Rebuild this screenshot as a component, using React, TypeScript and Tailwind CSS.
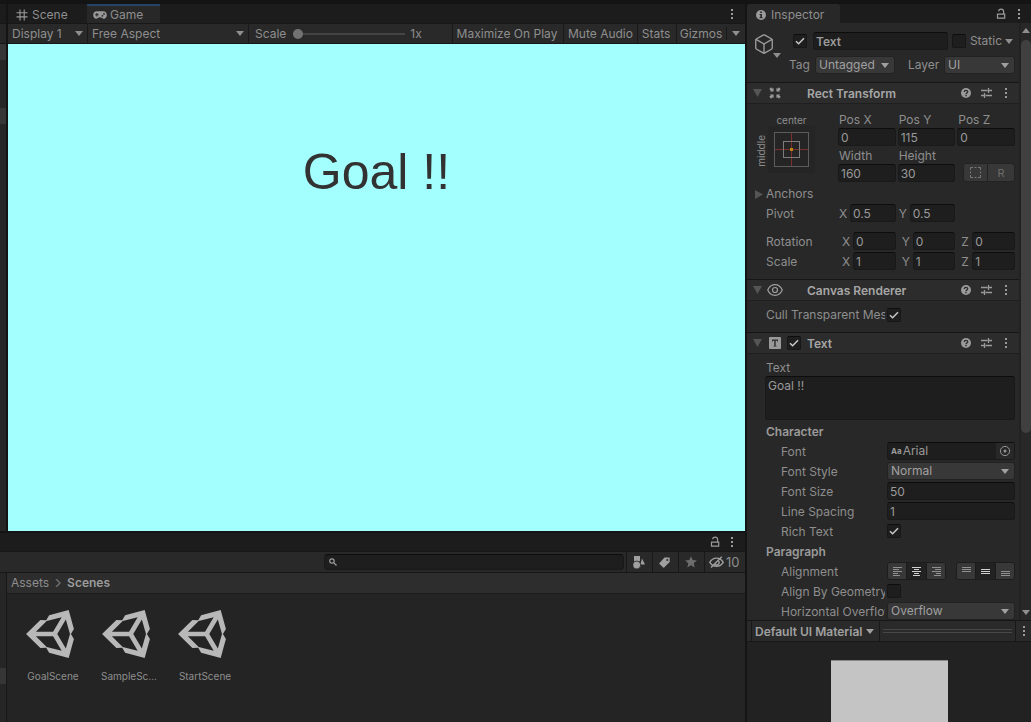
import React from "react";
import { Box } from "lucide-react";

type Kids = { children?: React.ReactNode };

/* ---------- icons ---------- */

const Caret = ({ className = "" }: { className?: string }) => (
  <svg viewBox="0 0 8 5" className={"w-2 h-[5px] shrink-0 fill-current " + className}>
    <path d="M0 0h8L4 5z" />
  </svg>
);

const CaretUp = () => (
  <svg viewBox="0 0 8 5" className="w-2 h-[5px] fill-[#8f8f8f]">
    <path d="M0 5h8L4 0z" />
  </svg>
);

const Kebab = () => (
  <svg viewBox="0 0 4 12" className="w-1 h-3 fill-[#9a9a9a]">
    <path d="M1 1h2v2H1zM1 5h2v2H1zM1 9h2v2H1z" />
  </svg>
);

const Lock = () => (
  <svg viewBox="0 0 10 12" className="w-[10px] h-3 fill-none stroke-[#9a9a9a]" strokeWidth="1.2">
    <path d="M1.5 6.2h7.2v4H1.5zM2.6 3.3C2.8 1.6 3.8 1.2 5 1.2c1.6 0 2.6.9 2.6 2.4v2.6" />
  </svg>
);

const GridIcon = () => (
  <svg viewBox="0 0 12 12" className="w-3 h-3 fill-none stroke-[#9a9a9a]" strokeWidth="1.1">
    <path d="M4 .5v11M8.2 .5v11M.5 3.7h11M.5 7.9h11" />
  </svg>
);

const Gamepad = () => (
  <svg viewBox="0 0 14 8" className="w-[14px] h-2">
    <path d="M3.8.3C1.6.3.2 2 .2 4s1.2 3.7 3 3.7c1.3 0 1.9-1.5 3.8-1.5s2.5 1.5 3.8 1.5c1.8 0 3-1.7 3-3.7S12.4.3 10.2.3z" fill="#9a9a9a" />
    <path d="M3.9 2v3.6M2.1 3.8h3.6" stroke="#282828" strokeWidth="1.1" />
    <circle cx="9.4" cy="4.8" r=".9" fill="#282828" />
    <circle cx="11" cy="2.9" r=".9" fill="#282828" />
  </svg>
);

const Info = () => (
  <svg viewBox="0 0 10 10" className="w-[10px] h-[10px]">
    <circle cx="5" cy="5" r="5" fill="#9a9a9a" />
    <path d="M4.2 1.6h1.7v1.5H4.2zM3.6 4h2.3v3.2h.7v1H3.5v-1h.8V5h-.7z" fill="#282828" />
  </svg>
);

const Help = () => (
  <svg viewBox="0 0 10 10" className="w-[10px] h-[10px]">
    <circle cx="5" cy="5" r="5" fill="#9a9a9a" />
    <path d="M3.3 3.9c0-1 .7-1.6 1.7-1.6s1.7.6 1.7 1.5C6.7 4.9 5 5 5 6.2" fill="none" stroke="#2c2c2c" strokeWidth="1.3" />
    <path d="M4.3 6.9h1.4v1.3H4.3z" fill="#2c2c2c" />
  </svg>
);

const Preset = () => (
  <svg viewBox="0 0 11 10" className="w-[11px] h-[10px] fill-none stroke-[#9a9a9a]" strokeWidth="1.3">
    <path d="M0 2.5h6.5M8 2.5h3M7.5 0v5M0 7.5h3M4.5 7.5H11M3.500 5v5" />
  </svg>
);

const RectIcon = () => (
  <svg viewBox="0 0 14 14" className="w-[14px] h-[14px] fill-[#9a9a9a]">
    <path d="M1.200 3.200L3.200 1.200 4.300 2.800 5.600 1.900V5.600H1.900L2.800 4.300zM12.800 3.200L10.800 1.200 9.700 2.800 8.400 1.900V5.600H12.100L11.200 4.300zM1.200 10.800L3.200 12.800 4.300 11.200 5.600 12.100V8.400H1.900L2.800 9.700zM12.800 10.800L10.800 12.800 9.700 11.200 8.400 12.100V8.400H12.100L11.200 9.700z" />
  </svg>
);

const Eye = () => (
  <svg viewBox="0 0 16 12" className="w-4 h-3 fill-none stroke-[#a0a0a0]" strokeWidth="1.2">
    <path d="M.7 6C2.4 2.300 5 .7 8 .7S13.600 2.300 15.300 6C13.600 9.700 11 11.300 8 11.300S2.400 9.700.7 6z" />
    <circle cx="8" cy="6" r="2.5" />
  </svg>
);

const TextIcon = () => (
  <svg viewBox="0 0 12 12" className="w-3 h-3">
    <rect width="12" height="12" rx="1" fill="#9a9a9a" />
    <path d="M3 2.500h6v2H8.200v-.8H6.700v5h.8v.9h-3v-.9h.8v-5H3.800v.8H3z" fill="#2c2c2c" />
  </svg>
);

const Unity = () => (
  <svg viewBox="15 14 484 484" className="w-12 h-12 mr-[6px] fill-[#b8b8b8]">
    <path d="M498.110,206.400,445.310,14.720,248.200,66.080,219,116.140l-59.200-.43L15.540,256,159.820,396.320l59.170-.43,29.240,50,197.080,51.360,52.800-191.620-30-49.630ZM223.770,124.200,374.550,86.510,288,232.330H114.870Zm0,263.630L114.870,279.710H288l86.550,145.810Zm193,14L330.170,256l86.580-145.840L458.560,256Z" />
  </svg>
);

const Shapes = () => (
  <svg viewBox="0 0 12 13" className="w-3 h-[13px] fill-[#a0a0a0]">
    <path d="M1 0h6v5H1zM9 2.500l3 6H7.500z" />
    <circle cx="3.700" cy="9" r="4" stroke="#2a2a2a" strokeWidth=".8" />
  </svg>
);

const TagIcon = () => (
  <svg viewBox="0 0 11 11" className="w-[11px] h-[11px]">
    <path d="M5.500.5h4.600q.6 0 .6.600v4L5.200 10.600Q4.700 11 4.200 10.600L.5 6.900q-.4-.5 0-1z" fill="#a0a0a0" />
    <circle cx="8.300" cy="2.900" r="1" fill="#2a2a2a" />
  </svg>
);

const Star = () => (
  <svg viewBox="0 0 12 12" className="w-3 h-3 fill-[#6c6c6c]">
    <path d="M6 .2l1.700 3.900 4.200.4-3.200 2.800 1 4.200L6 9.300l-3.700 2.200 1-4.200L.1 4.500l4.200-.4z" />
  </svg>
);

const EyeOff = () => (
  <svg viewBox="0 0 15 12" className="w-[15px] h-3 fill-none stroke-[#a0a0a0]" strokeWidth="1.4">
    <path d="M.8 6.300C2.400 3.400 4.700 2.100 7.500 2.100s5.100 1.300 6.700 4.200c-1.600 2.700-3.900 3.900-6.700 3.900S2.400 9 .8 6.300z" />
    <path d="M9.300 4.700a2.400 2.400 0 1 1-3.500 3.200" />
    <path d="M2 11.500L12.800.7" />
  </svg>
);

const SearchIcon = () => (
  <svg viewBox="0 0 8 8" className="w-2 h-2 shrink-0 fill-none stroke-[#a0a0a0]" strokeWidth="1.2">
    <circle cx="3" cy="3" r="2.2" />
    <path d="M4.700 4.700l2.800 2.800" />
  </svg>
);

const TargetIcon = () => (
  <svg viewBox="0 0 12 12" className="w-3 h-3">
    <circle cx="6" cy="6" r="4.600" fill="none" stroke="#949494" />
    <circle cx="6" cy="6" r="1.500" fill="#949494" />
  </svg>
);

const AnchorIcon = () => (
  <svg viewBox="0 0 35 35" className="w-[35px] h-[35px] fill-none" shapeRendering="crispEdges">
    <rect x=".5" y=".5" width="34" height="34" stroke="#5c5c5c" />
    <path d="M1 17.500h33M17.500 1v33" stroke="#7c2f2f" />
    <rect x="9.500" y="9.500" width="16" height="16" stroke="#7c7c7c" />
    <rect x="16" y="16" width="3" height="3" fill="#b8860b" />
  </svg>
);

const LINES: Record<string, string> = {
  left: "M0 .5h9M0 2.500h6M0 4.500h9M0 6.500h5M0 8.500h7",
  center: "M0 .5h9M2 2.500h5M0 4.500h9M2 6.500h5M1 8.500h7",
  right: "M0 .5h9M3 2.500h6M0 4.500h9M4 6.500h5M2 8.500h7",
  top: "M0 .5h9M0 2.500h9M0 4.500h9",
  middle: "M0 2.500h9M0 4.500h9M0 6.500h9",
  bottom: "M0 4.500h9M0 6.500h9M0 8.500h9",
};

/* ---------- controls ---------- */

const Check = ({ label, id, on = false }: { label: string; id?: string; on?: boolean }) => (
  <span className="relative block w-[14px] h-[14px] shrink-0">
    <input
      id={id}
      type="checkbox"
      defaultChecked={on}
      aria-label={label}
      className="peer block appearance-none w-[14px] h-[14px] rounded-[2px] bg-[#1e1e1e] border border-[#171717] border-t-[#0d0d0d]"
    />
    <svg viewBox="0 0 14 14" className="absolute inset-0 hidden peer-checked:block pointer-events-none fill-none stroke-[#c8c8c8]" strokeWidth="1.5">
      <path d="M3 7.300l2.600 2.500L11 4.300" />
    </svg>
  </span>
);

const Field = ({ label, id, value, className = "" }: { label: string; id?: string; value: string; className?: string }) => (
  <input
    id={id}
    aria-label={label}
    defaultValue={value}
    className={"block h-[18px] w-full min-w-0 rounded-[3px] bg-[#1e1e1e] border border-[#191919] border-t-[#0d0d0d] px-[2px] text-[#9a9a9a] outline-none " + className}
  />
);

const Select = ({ label, id, value, className = "" }: { label: string; id?: string; value: string; className?: string }) => (
  <span className={"relative flex items-center h-[18px] rounded-[3px] border border-[#222] bg-[#383838] text-[#a0a0a0] " + className}>
    <select id={id} aria-label={label} defaultValue={value} className="appearance-none w-full h-4 bg-transparent pl-[3px] pr-4 leading-4 outline-none">
      <option>{value}</option>
    </select>
    <Caret className="absolute right-[5px] pointer-events-none" />
  </span>
);

const IconButton = ({ label, children, className = "" }: Kids & { label: string; className?: string }) => (
  <button aria-label={label} className={"flex items-center justify-center " + className}>
    {children}
  </button>
);

const ToolSelect = ({ label, value, className }: { label: string; value: string; className: string }) => (
  <span className={"relative flex items-center border-r border-[#191919] " + className}>
    <select aria-label={label} defaultValue={value} className="appearance-none w-full h-[18px] bg-transparent pl-1 outline-none">
      <option>{value}</option>
    </select>
    <Caret className="absolute right-1 pointer-events-none" />
  </span>
);

const ToolButton = ({ children, className = "" }: Kids & { className?: string }) => (
  <button className={"border-r border-[#191919] whitespace-nowrap " + className}>{children}</button>
);

/* ---------- inspector pieces ---------- */

const ComponentHeader = ({ title, icon, toggle = false }: { title: string; icon: React.ReactNode; toggle?: boolean }) => (
  <header className="flex items-center h-[22px] border-y border-t-[#161616] border-b-[#1f1f1f] bg-[#2c2c2c] pl-[6px]">
    <svg viewBox="0 0 10 8" className="w-[10px] h-2 fill-[#555]">
      <path d="M0 0h9L4.500 8z" />
    </svg>
    <span className="flex w-6 justify-center">{icon}</span>
    <span className="w-5">{toggle && <Check label={"Enable " + title} on />}</span>
    <h2 className="flex-1 pt-[2px] font-semibold text-[#a6a6a6]">{title}</h2>
    <IconButton label="Help" className="w-5"><Help /></IconButton>
    <IconButton label="Presets" className="w-5"><Preset /></IconButton>
    <IconButton label="More" className="w-5 mr-[3px]"><Kebab /></IconButton>
  </header>
);

const Row = ({ label, id, children }: Kids & { label: string; id?: string }) => (
  <div className="flex h-5 pl-[34px] pr-1">
    <label htmlFor={id} className="w-[104px] mr-[2px] shrink-0 overflow-hidden whitespace-nowrap leading-5">{label}</label>
    <div className="flex-1 min-w-0">{children}</div>
  </div>
);

const Axis = ({ name, group, value, inset = false }: { name: string; group: string; value: string; inset?: boolean }) => (
  <label className={inset ? "flex pl-[3px]" : "flex"}>
    <span className="w-3 pl-[1px] shrink-0 leading-5">{name}</span>
    <Field label={group + " " + name} value={value} />
  </label>
);

const AxisRow = ({ label, values, inset }: { label: string; values: [string, string][]; inset?: boolean }) => (
  <div className="flex h-5 pl-[19px] pr-1">
    <span className="w-[72px] shrink-0 leading-5">{label}</span>
    <div className="grid grid-cols-3 gap-[2px] flex-1">
      {values.map(([n, v]) => (
        <Axis key={n} name={n} group={label} value={v} inset={inset} />
      ))}
    </div>
  </div>
);

const Stacked = ({ label, value }: { label: string; value: string }) => (
  <label className="block">
    <span className="block h-[18px] leading-5 pl-[1px]">{label}</span>
    <Field label={label} value={value} />
  </label>
);

const AlignGroup = ({ names, active }: { names: string[]; active: string }) => (
  <div className="flex h-[18px] w-[59px] rounded-[3px] overflow-hidden border border-[#1d1d1d]">
    {names.map((n) => (
      <IconButton
        key={n}
        label={"Align " + n}
        className={n === active ? "w-[21px] border-x border-[#1b1b1b] bg-[#222] text-[#d0d0d0]" : "flex-1 bg-[#383838] text-[#909090]"}
      >
        <svg viewBox="0 0 9 9" className="w-[9px] h-[9px] shrink-0 stroke-current" shapeRendering="crispEdges">
          <path d={LINES[n]} />
        </svg>
      </IconButton>
    ))}
  </div>
);

const Inspector = () => (
  <aside className="flex flex-col w-[284px] shrink-0 min-h-0 bg-[#282828]">
    <div className="flex items-stretch h-[19px] shrink-0 bg-[#1c1c1c]">
      <button className="flex items-center gap-[5px] w-[93px] pl-[9px] pt-[2px] rounded-t-[3px] bg-[#282828]">
        <Info />
        Inspector
      </button>
      <span className="flex-1" />
      <IconButton label="Lock" className="w-5"><Lock /></IconButton>
      <IconButton label="Inspector menu" className="w-[15px] mr-[5px]"><Kebab /></IconButton>
    </div>

    <div className="flex flex-1 min-h-0">
      <div className="flex-1 min-w-0 overflow-hidden">
        <div className="flex h-[59px] pt-[9px] pr-1">
          <IconButton label="Object icon" className="relative w-[34px] h-6">
            <Box className="w-[22px] h-[22px] text-[#a0a0a0]" strokeWidth={1.4} />
            <Caret className="absolute right-0 -bottom-[2px] text-[#8f8f8f]" />
          </IconButton>
          <div className="flex-1 min-w-0 pl-[8px]">
            <div className="flex items-center h-[18px]">
              <span className="ml-1"><Check label="Active" on /></span>
              <div className="flex-1 ml-[6px] mr-1"><Field label="Name" value="Text" className="font-semibold" /></div>
              <Check id="static" label="Static" />
              <label htmlFor="static" className="ml-1 mr-[3px]">Static</label>
              <Caret className="mr-[2px]" />
            </div>
            <div className="flex items-center mt-[6px] h-[18px]">
              <label htmlFor="tag" className="w-[26px]">Tag</label>
              <Select id="tag" label="Tag" value="Untagged" className="w-20" />
              <label htmlFor="layer" className="w-9 ml-auto">Layer</label>
              <Select id="layer" label="Layer" value="UI" className="w-[71px]" />
            </div>
          </div>
        </div>

        <section>
          <ComponentHeader title="Rect Transform" icon={<RectIcon />} />
          <div className="h-[175px] pt-[6px]">
            <div className="flex h-[74px] pr-1">
              <div className="flex w-[91px]">
                <span className="w-[21px] pt-[18px] h-[64px] flex items-center justify-center pl-[6px] text-[10px]">
                  <span className="[writing-mode:vertical-rl] rotate-180">middle</span>
                </span>
                <span className="w-[47px] flex flex-col items-center text-[10px]">
                  <span className="h-4 leading-5">center</span>
                  <IconButton label="Anchor presets" className="w-[47px] h-[47px] bg-[#252525]"><AnchorIcon /></IconButton>
                </span>
              </div>
              <div className="grid grid-cols-3 gap-x-[2px] flex-1 content-start">
                <Stacked label="Pos X" value="0" />
                <Stacked label="Pos Y" value="115" />
                <Stacked label="Pos Z" value="0" />
                <Stacked label="Width" value="160" />
                <Stacked label="Height" value="30" />
                <div className="flex self-end h-[19px] ml-[6px] rounded-[3px] overflow-hidden border border-[#232323] bg-[#383838]">
                  <IconButton label="Blueprint mode" className="w-6 border-r border-[#232323]">
                    <svg viewBox="0 0 11 11" className="w-[11px] h-[11px] fill-none stroke-[#777]">
                      <path d="M.5 3V.5H3M4.500.5h2M8 .5h2.500V3M10.500 4.500v2M10.500 8v2.500H8M6.500 10.500h-2M3 10.500H.5V8M.5 6.500v-2" />
                    </svg>
                  </IconButton>
                  <button className="flex-1 text-[11px] text-[#6c6c6c]">R</button>
                </div>
              </div>
            </div>
            <button className="flex items-center h-5 pl-[8px]">
              <svg viewBox="0 0 8 9" className="w-2 h-[9px] mr-[3px] fill-[#555]"><path d="M0 0v9l8-4.500z" /></svg>
              Anchors
            </button>
            <AxisRow label="Pivot" values={[["X", "0.5"], ["Y", "0.5"]]} />
            <div className="h-2" />
            <AxisRow inset label="Rotation" values={[["X", "0"], ["Y", "0"], ["Z", "0"]]} />
            <AxisRow inset label="Scale" values={[["X", "1"], ["Y", "1"], ["Z", "1"]]} />
          </div>
        </section>

        <section>
          <ComponentHeader title="Canvas Renderer" icon={<Eye />} />
          <div className="flex items-center h-[31px] pl-[19px] pb-1">
            <label htmlFor="cull" className="w-[119px] mr-[2px] overflow-hidden whitespace-nowrap">Cull Transparent Mesh</label>
            <Check id="cull" label="Cull Transparent Mesh" on />
          </div>
        </section>

        <section>
          <ComponentHeader title="Text" icon={<TextIcon />} toggle />
          <div className="pt-1">
            <div className="pl-[18px] pr-1">
              <label htmlFor="body" className="block h-[18px] leading-5 pl-[1px]">Text</label>
              <textarea
                id="body"
                defaultValue="Goal !!"
                className="block w-full h-11 resize-none rounded-[3px] border border-[#191919] border-t-[#0d0d0d] bg-[#1e1e1e] px-[2px] py-0 leading-[18px] outline-none text-[#9a9a9a]"
              />
            </div>
            <h3 className="mt-[2px] h-5 leading-5 pl-[19px] font-semibold text-[#9a9a9a]">Character</h3>
            <Row label="Font">
              <div className="flex items-center h-[18px] rounded-[3px] border border-[#191919] border-t-[#0d0d0d] bg-[#1e1e1e] pl-[3px] text-[#9a9a9a]">
                <span className="text-[8px] font-bold">Aa</span>
                <span className="flex-1 ml-[1px]">Arial</span>
                <IconButton label="Choose font" className="w-[18px] h-4 bg-[#282828]"><TargetIcon /></IconButton>
              </div>
            </Row>
            <Row label="Font Style" id="style"><Select id="style" label="Font Style" value="Normal" /></Row>
            <Row label="Font Size" id="size"><Field id="size" label="Font Size" value="50" /></Row>
            <Row label="Line Spacing" id="spacing"><Field id="spacing" label="Line Spacing" value="1" /></Row>
            <Row label="Rich Text" id="rich"><div className="pt-[2px]"><Check id="rich" label="Rich Text" on /></div></Row>
            <h3 className="h-5 leading-5 pl-[19px] font-semibold text-[#9a9a9a]">Paragraph</h3>
            <Row label="Alignment">
              <div className="flex justify-between">
                <AlignGroup names={["left", "center", "right"]} active="center" />
                <AlignGroup names={["top", "middle", "bottom"]} active="middle" />
              </div>
            </Row>
            <Row label="Align By Geometry" id="geo"><div className="pt-[2px]"><Check id="geo" label="Align By Geometry" /></div></Row>
            <Row label="Horizontal Overflow" id="hover"><Select id="hover" label="Horizontal Overflow" value="Overflow" /></Row>
          </div>
        </section>
      </div>

      <div className="flex flex-col items-center w-3 shrink-0 border-l-2 border-[#222] py-[5px]">
        <CaretUp />
        <div className="w-[10px] h-[393px] mt-[7px] rounded-full bg-[#404040]" />
        <span className="flex-1" />
        <Caret className="text-[#8f8f8f]" />
      </div>
    </div>

    <div className="shrink-0 flex items-center h-[22px] border-y border-[#171717] bg-[#2a2a2a] pl-1">
      <button className="flex items-center gap-1 h-5 w-[129px] pt-[1px] border-x border-[#191919] pl-[3px] font-semibold text-[#a0a0a0] whitespace-nowrap">
        Default UI Material
        <Caret />
      </button>
      <span className="flex-1 mx-[3px] h-1 border-y border-[#484848]" />
      <IconButton label="Preview menu" className="w-4 h-5 border-l border-[#191919]"><Kebab /></IconButton>
    </div>
    <div className="shrink-0 flex justify-center h-20 pt-[18px] bg-[#222]">
      <div className="w-[117px] bg-[#c4c4c4] border-t border-[#888]" />
    </div>
  </aside>
);

/* ---------- left side ---------- */

const GameView = () => (
  <section className="flex flex-col flex-1 min-w-0">
    <div className="flex h-[19px] bg-[#1c1c1c]">
      <button className="flex items-center gap-1 w-[79px] pl-2 pt-[2px]"><GridIcon />Scene</button>
      <button className="flex items-center gap-[3px] w-[73px] pl-[6px] border-t-2 border-[#234465] bg-[#282828]"><Gamepad />Game</button>
      <span className="flex-1" />
      <IconButton label="Game menu" className="w-4 mr-[5px]"><Kebab /></IconButton>
    </div>
    <div className="flex h-[21px] border-y border-[#171717] bg-[#292929]">
      <ToolSelect label="Display" value="Display 1" className="w-20" />
      <ToolSelect label="Aspect" value="Free Aspect" className="w-[161px]" />
      <label className="flex items-center flex-1 min-w-0 pl-[6px] border-r border-[#191919]">
        Scale
        <input
          type="range"
          min="1"
          max="5"
          defaultValue="1"
          className="appearance-none w-[112px] h-3 ml-[7px] mr-[5px] bg-transparent [&::-webkit-slider-runnable-track]:h-[2px] [&::-webkit-slider-runnable-track]:bg-[#444] [&::-webkit-slider-thumb]:appearance-none [&::-webkit-slider-thumb]:w-[10px] [&::-webkit-slider-thumb]:h-[10px] [&::-webkit-slider-thumb]:-mt-1 [&::-webkit-slider-thumb]:rounded-full [&::-webkit-slider-thumb]:bg-[#727272]"
        />
        1x
      </label>
      <ToolButton className="w-[111px] pr-[2px]">Maximize On Play</ToolButton>
      <ToolButton className="w-[74px]">Mute Audio</ToolButton>
      <ToolButton className="w-[39px] pr-[2px]">Stats</ToolButton>
      <ToolButton className="w-[50px] pr-[1px] my-[3px] leading-[13px]">Gizmos</ToolButton>
      <IconButton label="Gizmo options" className="w-[18px]"><Caret /></IconButton>
    </div>
    <div className="flex-1 flex justify-center bg-[#a3fffd] pt-[98px]">
      <p className="font-['Liberation_Sans',Arial,sans-serif] text-[50px] leading-[60px] text-[#323232]">Goal !!</p>
    </div>
  </section>
);

const SCENES = ["GoalScene", "SampleSc...", "StartScene"];

const Project = () => (
  <section className="flex flex-col shrink-0 h-[189px]">
    <div className="flex items-center justify-end h-[18px] bg-[#1c1c1c] pr-[5px]">
      <IconButton label="Lock" className="w-[18px]"><Lock /></IconButton>
      <IconButton label="Project menu" className="w-4"><Kebab /></IconButton>
    </div>
    <div className="flex justify-end h-[22px] border-y border-[#171717] bg-[#292929]">
      <label className="flex items-center w-[300px] h-4 mt-[2px] mr-[2px] pl-1 rounded-[4px] border border-[#191919] border-t-[#0d0d0d] bg-[#1e1e1e]">
        <SearchIcon />
        <input aria-label="Search" className="flex-1 min-w-0 h-[14px] bg-transparent pl-1 outline-none" />
      </label>
      <IconButton label="Search by type" className="w-[26px] pr-[2px] border-l border-[#191919]"><Shapes /></IconButton>
      <IconButton label="Search by label" className="w-[26px] pr-[2px] border-l border-[#191919]"><TagIcon /></IconButton>
      <IconButton label="Favorites" className="w-[26px] pr-[2px] border-l border-[#191919]"><Star /></IconButton>
      <button className="flex items-center gap-[2px] w-[41px] pl-1 border-l border-[#191919] text-[13px]"><EyeOff />10</button>
    </div>
    <div className="flex flex-1 min-h-0">
      <div className="w-[7px] border-r border-[#171717] bg-[#262626] pt-[95px]"><div className="h-4 bg-[#363636]" /></div>
      <div className="flex-1 bg-[#242424]">
        <nav className="flex items-center h-[21px] pl-1 border-b border-[#1c1c1c] bg-[#2d2d2d]">
          <a href="#assets">Assets</a>
          <svg viewBox="0 0 6 8" className="w-[6px] h-2 mx-[6px] fill-none stroke-[#6c6c6c]" strokeWidth="1.5"><path d="M1 0l4 4-4 4" /></svg>
          <a href="#scenes" className="font-semibold text-[#9c9c9c]">Scenes</a>
        </nav>
        <ul className="flex pt-4 pl-2">
          {SCENES.map((s) => (
            <li key={s} className="w-[76px]">
              <button className="flex flex-col items-center w-full text-[10px] leading-[14px]">
                <Unity />
                <span className="mt-[11px]">{s}</span>
              </button>
            </li>
          ))}
        </ul>
      </div>
    </div>
  </section>
);

export default function App() {
  return (
    <main className="flex h-screen pt-1 gap-[2px] overflow-hidden bg-[#141414] font-['Inter',sans-serif] text-[12px] leading-4 text-[#8e8e8e]">
      <div className="flex flex-col flex-1 min-w-0 gap-[2px]">
        <div className="flex flex-1 min-h-0 gap-[2px]">
          <div className="w-[6px] shrink-0 bg-[#262626]">
            <div className="h-[19px] bg-[#1c1c1c]" />
            <div className="h-[21px] border-y border-[#171717]" />
            <div className="h-4 bg-[#363636]" />
            <div className="mt-12 h-4 bg-[#363636]" />
          </div>
          <GameView />
        </div>
        <Project />
      </div>
      <Inspector />
    </main>
  );
}
